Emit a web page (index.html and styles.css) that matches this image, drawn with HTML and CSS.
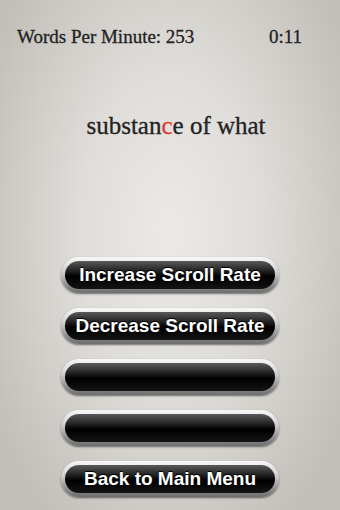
FILE: index.html
```html
<!DOCTYPE html>
<html lang="en">
<head>
  <meta charset="UTF-8">
  <meta name="viewport" content="width=device-width, initial-scale=1.0">
  <title>Speed Reader</title>
  <link rel="stylesheet" href="styles.css">
</head>
<body>

  <div class="screen">
    <div class="header">
      <span>Words Per Minute: 253</span>
      <span>0:11</span>
    </div>

    <div class="word">substan<span class="focus">c</span>e of what</div>

    <div class="buttons">
      <button class="btn"><span>Increase Scroll Rate</span></button>
      <button class="btn"><span>Decrease Scroll Rate</span></button>
      <button class="btn"><span></span></button>
      <button class="btn"><span></span></button>
      <button class="btn"><span>Back to Main Menu</span></button>
    </div>
  </div>

</body>
</html>
```

FILE: styles.css
```css
body {
  margin: 0;
  font-family: "Liberation Serif", serif;
}

.screen {
  width: 340px;
  height: 510px;
  display: flex;
  flex-direction: column;
  background: radial-gradient(ellipse 60% 70% at 50% 45%, #ebeae7 0%, #dfddd9 45%, #c2bfb9 100%);
}

.header {
  display: flex;
  justify-content: space-between;
  padding: 26px 38px 0 17px;
  font-size: 19px;
  color: #222;
  -webkit-text-stroke: 0.3px #222;
}

.word {
  margin-top: 64px;
  padding-left: 12px;
  text-align: center;
  font-size: 25px;
  color: #222;
  -webkit-text-stroke: 0.3px #222;
}

.focus {
  color: #e03a2e;
  -webkit-text-stroke: 0.3px #e03a2e;
}

.buttons {
  margin-top: auto;
  display: flex;
  flex-direction: column;
  align-items: center;
  gap: 15px;
  padding-bottom: 13px;
}

.btn {
  width: 218px;
  height: 36px;
  padding: 4px;
  border: none;
  border-radius: 18px;
  background: linear-gradient(#f8f8f8 0%, #d0d0d0 40%, #8a8a8a 80%, #6e6e6e 100%);
  box-shadow: 0 1px 2px rgba(0, 0, 0, 0.5);
  cursor: pointer;
}

.btn span {
  display: flex;
  align-items: center;
  justify-content: center;
  height: 100%;
  border-radius: 14px;
  background: linear-gradient(#5a5a5a 0%, #222 35%, #000 55%, #141414 100%);
  color: #fff;
  font-family: "Liberation Sans", Arial, sans-serif;
  font-weight: bold;
  font-size: 19px;
  text-shadow: 0 -1px 0 #000;
}
```
